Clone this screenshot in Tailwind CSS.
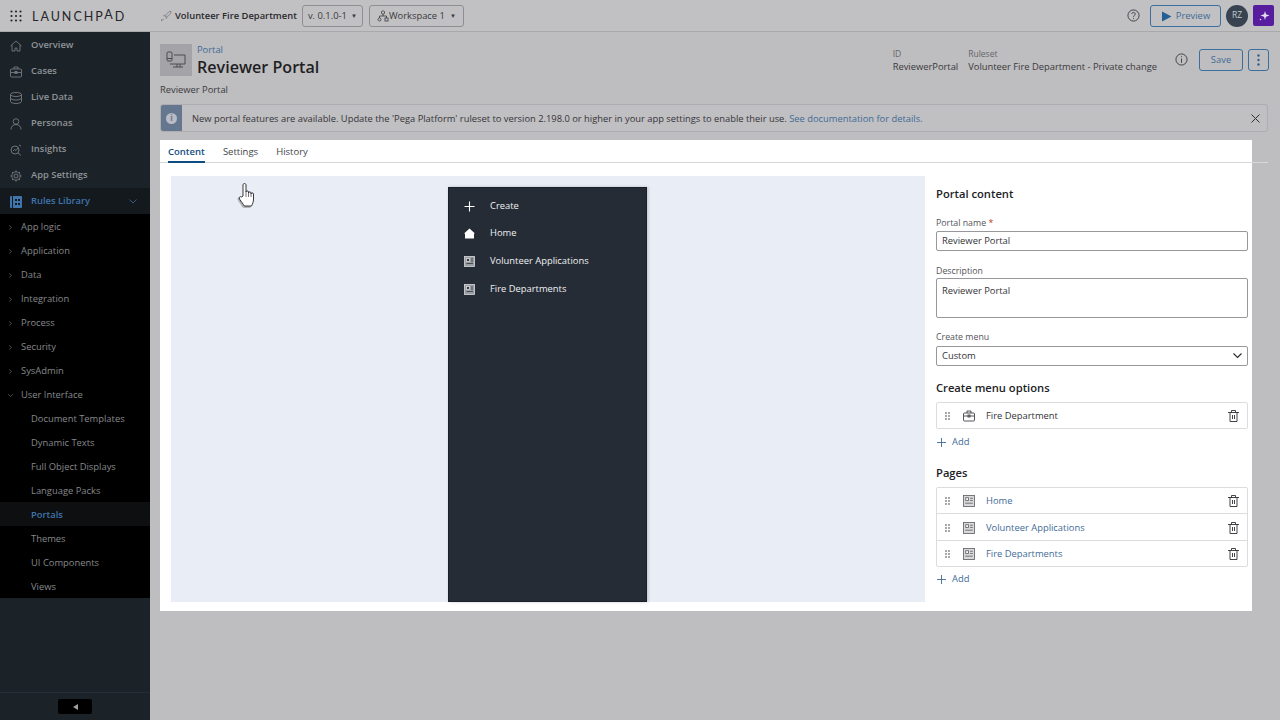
<!DOCTYPE html>
<html lang="en">
<head>
  <meta charset="UTF-8" />
  <meta name="viewport" content="width=device-width, initial-scale=1.0" />
  <title>Reviewer Portal</title>
  <script src="https://cdn.jsdelivr.net/npm/@tailwindcss/browser@4"></script>
</head>
<body class="bg-[#bebdbf] font-['Open_Sans',sans-serif] text-[#2b2b2e] overflow-hidden">
  <div class="relative w-[1280px] h-[720px] flex flex-col overflow-hidden">
    <!-- Top bar -->
    <header class="h-8 shrink-0 flex items-center bg-[#c1c0c2] border-b border-[#a9a8aa]">
      <div class="w-[160px] flex items-center pl-[10px] shrink-0">
        <svg class="w-3 h-3 mr-[10px]" viewBox="0 0 12 12" fill="#26262a"><circle cx="1.5" cy="1.5" r="1.1"/><circle cx="6" cy="1.5" r="1.1"/><circle cx="10.5" cy="1.5" r="1.1"/><circle cx="1.5" cy="6" r="1.1"/><circle cx="6" cy="6" r="1.1"/><circle cx="10.5" cy="6" r="1.1"/><circle cx="1.5" cy="10.5" r="1.1"/><circle cx="6" cy="10.5" r="1.1"/><circle cx="10.5" cy="10.5" r="1.1"/></svg>
        <span class="text-[12.5px] tracking-[0.16em] text-[#26262a] font-['Lato',sans-serif] leading-none pt-[3px]">LAUNCHP<span class="relative top-[-2px]">A</span>D</span>
      </div>
      <svg class="w-3 h-3 mr-[3px] shrink-0" viewBox="0 0 12 12" fill="none" stroke="#8a8a90" stroke-width="1"><path d="M1 11l3-2M5 7c1-3 3-5 6-6 0 3-2 5-5 6l-1 0zM3 6l2-1M6 9l1-2M2 9l-1 1"/></svg>
      <span class="text-[9.4px] font-semibold text-[#2a2a2e] mr-[5px] pt-[2px]">Volunteer Fire Department</span>
      <button class="h-[22px] w-[61px] rounded-[3px] border border-[#8f8e92] text-[9.4px] text-[#3a3a40] flex items-center justify-center gap-1 mr-[6px] pt-[1px]">v. 0.1.0-1 <span class="text-[6px]">▼</span></button>
      <button class="h-[22px] w-[95px] rounded-[3px] border border-[#8f8e92] text-[9.4px] text-[#3a3a40] flex items-center justify-center pt-[1px]">
        <svg class="w-3 h-3" viewBox="0 0 12 12" fill="none" stroke="#3a3a40" stroke-width="0.8"><rect x="4.5" y="1" width="3" height="3" rx="1"/><circle cx="2.5" cy="9.5" r="1.5"/><rect x="8" y="8" width="3" height="3"/><path d="M6 4v2M2.5 8V6h7v2"/></svg>
        Workspace 1 <span class="text-[6px] ml-[5px]">▼</span>
      </button>
      <div class="ml-auto flex items-center pr-[6px]">
        <svg class="w-[13px] h-[13px] mr-[10px]" viewBox="0 0 14 14" fill="none" stroke="#3a3a40" stroke-width="1"><circle cx="7" cy="7" r="6"/><path d="M5.2 5.4c0-2.3 3.700-2.300 3.700 0 0 1.500-1.900 1.500-1.900 3M7 9.600v1"/></svg>
        <button class="h-[22px] w-[71px] rounded-[3px] border border-[#3d6f9e] text-[9.4px] text-[#3f6c97] flex items-center justify-center gap-[4px] pt-[1px]">
          <svg class="w-[11px] h-[11px]" viewBox="0 0 11 11" fill="#255f95"><path d="M1 0.500l9.500 5-9.500 5z"/></svg>Preview
        </button>
        <div class="w-[22px] h-[22px] rounded-full bg-[#374350] text-[8.500px] text-[#c8c8cc] flex items-center justify-center ml-[5px]">RZ</div>
        <div class="w-[21px] h-[21px] rounded-[2px] bg-[#581d9e] flex items-center justify-center ml-[5px]">
          <svg class="w-3 h-3" viewBox="0 0 12 12" fill="#e6dcf2"><path d="M7 1l1 3.200L11.500 5.500 8 6.800 7 10 6 6.800 2.500 5.500 6 4.200z"/><circle cx="2.500" cy="9.500" r="0.800"/></svg>
        </div>
      </div>
    </header>

    <div class="flex flex-1 min-h-0">
      <!-- Sidebar -->
      <aside class="w-[150px] shrink-0 bg-[#1b2329] flex flex-col text-[9.4px] font-semibold text-[#8f9296]">
        <a class="h-[26px] flex items-center pl-[10px] gap-[9px] pt-[1px]"><svg class="w-[12px] h-[12px]" viewBox="0 0 12 12" fill="none" stroke="#777b80" stroke-width="0.9"><path d="M0.500 6L6 1l5.500 5M2 5v6h3V8h2v3h3V5"/></svg>Overview</a>
        <a class="h-[26px] flex items-center pl-[10px] gap-[9px] pt-[1px]"><svg class="w-[12px] h-[12px]" viewBox="0 0 12 12" fill="none" stroke="#777b80" stroke-width="0.9"><rect x="0.500" y="3" width="11" height="8" rx="1"/><path d="M4 3V1h4v2M0.500 6.500h11"/><rect x="5" y="5.500" width="2" height="2"/></svg>Cases</a>
        <a class="h-[26px] flex items-center pl-[10px] gap-[9px] pt-[1px]"><svg class="w-[12px] h-[12px]" viewBox="0 0 12 12" fill="none" stroke="#777b80" stroke-width="0.9"><ellipse cx="6" cy="2.500" rx="5.500" ry="2"/><path d="M0.500 2.500v7c0 1.100 2.500 2 5.500 2s5.500-.9 5.500-2v-7M0.500 6c0 1.100 2.500 2 5.500 2s5.500-.9 5.500-2"/></svg>Live Data</a>
        <a class="h-[26px] flex items-center pl-[10px] gap-[9px] pt-[1px]"><svg class="w-[12px] h-[12px]" viewBox="0 0 12 12" fill="none" stroke="#777b80" stroke-width="0.9"><circle cx="6" cy="3.500" r="2.800"/><path d="M1 11.500c0-3 2-5 5-5s5 2 5 5"/></svg>Personas</a>
        <a class="h-[26px] flex items-center pl-[10px] gap-[9px] pt-[1px]"><svg class="w-[12px] h-[12px]" viewBox="0 0 12 12" fill="none" stroke="#777b80" stroke-width="0.9"><circle cx="5" cy="6" r="4"/><path d="M8 9l3 2.500M3 7l1.500-1.500 1.500 1 2-2.500M9 1l2 1"/></svg>Insights</a>
        <a class="h-[26px] flex items-center pl-[10px] gap-[9px] pt-[1px]"><svg class="w-[12px] h-[12px]" viewBox="0 0 12 12" fill="none" stroke="#777b80" stroke-width="0.9"><circle cx="6" cy="6" r="2"/><circle cx="6" cy="6" r="4.200"/><path d="M6 .5v1.300M6 10.200v1.300M.5 6h1.300M10.200 6h1.300M2 2l1 1M9 9l1 1M10 2L9 3M3 9l-1 1"/></svg>App Settings</a>
        <a class="h-[26px] flex items-center pl-[10px] gap-[9px] pt-[1px] bg-[#14191e] text-[#3f74ad]">
          <svg class="w-[12px] h-[12px]" viewBox="0 0 12 12"><rect width="12" height="12" rx="1" fill="#3f74ad"/><rect x="2" y="0" width="1" height="12" fill="#14191e"/><rect x="5" y="3" width="2" height="2" fill="#14191e"/><rect x="8" y="3" width="2" height="2" fill="#14191e"/><rect x="5" y="7" width="2" height="2" fill="#14191e"/><rect x="8" y="7" width="2" height="2" fill="#14191e"/></svg>
          Rules Library
          <svg class="ml-auto mr-[13px] w-[8px] h-[5px]" viewBox="0 0 8 5" fill="none" stroke="#3f6d9f" stroke-width="0.8"><path d="M0.500 0.500L4 4l3.500-3.500"/></svg>
        </a>
        <div class="bg-black font-normal text-[9.4px] text-[#86888b]">
          <a class="h-6 flex items-center pl-[9px] pt-[2px]"><svg class="w-[3px] h-[5px] mr-[9px]" viewBox="0 0 3 5" fill="none" stroke="#66686b" stroke-width=".7"><path d="M.3.300L2.500 2.500.3 4.700"/></svg>App logic</a>
          <a class="h-6 flex items-center pl-[9px] pt-[2px]"><svg class="w-[3px] h-[5px] mr-[9px]" viewBox="0 0 3 5" fill="none" stroke="#66686b" stroke-width=".7"><path d="M.3.300L2.500 2.500.3 4.700"/></svg>Application</a>
          <a class="h-6 flex items-center pl-[9px] pt-[2px]"><svg class="w-[3px] h-[5px] mr-[9px]" viewBox="0 0 3 5" fill="none" stroke="#66686b" stroke-width=".7"><path d="M.3.300L2.500 2.500.3 4.700"/></svg>Data</a>
          <a class="h-6 flex items-center pl-[9px] pt-[2px]"><svg class="w-[3px] h-[5px] mr-[9px]" viewBox="0 0 3 5" fill="none" stroke="#66686b" stroke-width=".7"><path d="M.3.300L2.500 2.500.3 4.700"/></svg>Integration</a>
          <a class="h-6 flex items-center pl-[9px] pt-[2px]"><svg class="w-[3px] h-[5px] mr-[9px]" viewBox="0 0 3 5" fill="none" stroke="#66686b" stroke-width=".7"><path d="M.3.300L2.500 2.500.3 4.700"/></svg>Process</a>
          <a class="h-6 flex items-center pl-[9px] pt-[2px]"><svg class="w-[3px] h-[5px] mr-[9px]" viewBox="0 0 3 5" fill="none" stroke="#66686b" stroke-width=".7"><path d="M.3.300L2.500 2.500.3 4.700"/></svg>Security</a>
          <a class="h-6 flex items-center pl-[9px] pt-[2px]"><svg class="w-[3px] h-[5px] mr-[9px]" viewBox="0 0 3 5" fill="none" stroke="#66686b" stroke-width=".7"><path d="M.3.300L2.500 2.500.3 4.700"/></svg>SysAdmin</a>
          <a class="h-6 flex items-center pl-[8px] pt-[2px]"><svg class="w-[5px] h-[3px] mr-[8px]" viewBox="0 0 5 3" fill="none" stroke="#66686b" stroke-width=".7"><path d="M.3.300L2.500 2.500 4.700.300"/></svg>User Interface</a>
          <a class="h-6 flex items-center pl-[31px] pt-[2px]">Document Templates</a>
          <a class="h-6 flex items-center pl-[31px] pt-[2px]">Dynamic Texts</a>
          <a class="h-6 flex items-center pl-[31px] pt-[2px]">Full Object Displays</a>
          <a class="h-6 flex items-center pl-[31px] pt-[2px]">Language Packs</a>
          <a class="h-6 flex items-center pl-[31px] pt-[2px] bg-[#0d0f11] font-semibold text-[#3f74ad]">Portals</a>
          <a class="h-6 flex items-center pl-[31px] pt-[2px]">Themes</a>
          <a class="h-6 flex items-center pl-[31px] pt-[2px]">UI Components</a>
          <a class="h-6 flex items-center pl-[31px] pt-[2px]">Views</a>
        </div>
        <div class="mt-auto h-[28px] border-t border-[#262e35] flex items-center justify-center">
          <div class="w-[34px] h-[15px] rounded-[2px] bg-black flex items-center justify-center">
            <svg class="w-[5px] h-[6px]" viewBox="0 0 5 6" fill="#a0a0a0"><path d="M5 0v6L0 3z"/></svg>
          </div>
        </div>
      </aside>

      <!-- Main -->
      <main class="flex-1 min-w-0 pl-[10px] pr-[12px] pt-3">
        <!-- Rule header -->
        <div class="flex items-start h-8">
          <div class="w-8 h-8 bg-[#a4a4a8] flex items-center justify-center shrink-0">
            <svg class="w-5 h-5" viewBox="0 0 20 20" fill="none" stroke="#4b4b50" stroke-width="1"><rect x="1" y="2" width="5" height="9" rx="1"/><path d="M1 8.500h5M8 5h11v9H4M11 14v3M14 14v3M7 17h10"/></svg>
          </div>
          <div class="ml-[5px] leading-none">
            <div class="text-[9.35px] text-[#3f6c97] h-[10px] mt-[1px] leading-[10px]">Portal</div>
            <h1 class="text-[16.1px] font-semibold text-[#1f1f23] mt-[2px] leading-[20px]">Reviewer Portal</h1>
          </div>
          <div class="ml-auto flex items-start pt-[4px] mr-[-1px]">
            <div class="leading-[12px] mr-[10px]"><div class="text-[#66666a] text-[8.500px]">ID</div><div class="text-[#3a3a3e] text-[9.35px] mt-[1px]">ReviewerPortal</div></div>
            <div class="leading-[12px]"><div class="text-[#66666a] text-[8.500px]">Ruleset</div><div class="text-[#3a3a3e] text-[9.35px] mt-[1px]">Volunteer Fire Department - Private change</div></div>
            <svg class="w-[13px] h-[13px] ml-[18px] mt-[5px]" viewBox="0 0 14 14" fill="none" stroke="#3a3a40" stroke-width="1"><circle cx="7" cy="7" r="6"/><path d="M7 6v4.500M7 3.500v1"/></svg>
            <button class="ml-[11px] w-[44px] h-[22px] mt-[1px] rounded-[3px] border border-[#3d6f9e] text-[9.4px] text-[#3f6c97]">Save</button>
            <button class="ml-[5px] w-[21px] h-[22px] mt-[1px] rounded-[3px] border border-[#3d6f9e] flex items-center justify-center">
              <svg class="w-[3px] h-[12px]" viewBox="0 0 3 12" fill="#33608c"><circle cx="1.500" cy="1.500" r="1.200"/><circle cx="1.500" cy="6" r="1.200"/><circle cx="1.500" cy="10.500" r="1.200"/></svg>
            </button>
          </div>
        </div>
        <p class="text-[9.35px] text-[#3a3a3e] mt-[7px] leading-[14px]">Reviewer Portal</p>

        <!-- Notice -->
        <div class="mt-[7px] h-[28px] rounded-[3px] border border-[#adacb0] bg-[#c0bfc2] flex items-center overflow-hidden">
          <div class="w-[21px] h-full bg-[#65778f] flex items-center justify-center shrink-0">
            <div class="w-[11px] h-[11px] rounded-full bg-[#b8bcc4] text-[8px] font-bold text-[#65778f] flex items-center justify-center leading-none">i</div>
          </div>
          <span class="ml-[10px] text-[9.35px] text-[#36363a] pt-[2px]">New portal features are available. Update the 'Pega Platform' ruleset to version 2.198.0 or higher in your app settings to enable their use. <span class="text-[#3f6c97]">See documentation for details.</span></span>
          <svg class="ml-auto mr-[7px] w-[9px] h-[9px]" viewBox="0 0 9 9" fill="none" stroke="#2f2f33" stroke-width="1"><path d="M0.500 0.500l8 8M8.500 0.500l-8 8"/></svg>
        </div>

        <!-- Tabbed panel -->
        <div class="mt-[8px] w-[1092px] h-[471px] bg-white flex flex-col">
          <div class="h-[23px] shrink-0 border-b border-[#d8d8dc] flex items-stretch pl-2 gap-[18px] text-[9.5px] w-[1108px]">
            <span class="h-[23px] border-b-2 border-[#0f4c81] font-semibold text-[#154d80] flex items-center pt-[3px]">Content</span>
            <span class="flex items-center text-[#444448] pt-[2px]">Settings</span>
            <span class="flex items-center text-[#444448] pt-[2px]">History</span>
          </div>
          <div class="flex flex-1 min-h-0 pl-[11px] pt-[13px] pb-[9px]">
            <!-- Preview canvas -->
            <div class="w-[754px] bg-[#e9edf6] pt-[11px] pl-[277px]">
              <div class="w-[199px] h-[415px] bg-[#252c35] border border-[#1a2029] shadow-[1px_0_3px_rgba(0,0,0,0.2)] pt-[5px] text-[9.4px] text-[#eef0f3]">
                <div class="h-[27px] flex items-center pl-[15px] gap-[15px]"><svg class="w-[11px] h-[11px]" viewBox="0 0 11 11" stroke="#fff" stroke-width="1.100"><path d="M5.500 0.500v10M0.500 5.500h10"/></svg>Create</div>
                <div class="h-[27px] flex items-center pl-[15px] gap-[15px]"><svg class="w-[11px] h-[11px]" viewBox="0 0 11 11" fill="#fff"><path d="M5.500 0.500L11 5.500H10V10.500H1V5.500H0z"/></svg>Home</div>
                <div class="h-[28px] flex items-center pl-[15px] gap-[15px]"><svg class="w-[11px] h-[11px]" viewBox="0 0 11 11" fill="#9a9da1" stroke="#d8d9dc" stroke-width="0.800"><rect x="0.500" y="0.500" width="10" height="10"/><rect x="2.500" y="2.500" width="3" height="3" fill="#33393f"/><path d="M7 3h2M7 5h2M2.500 7.500h6.500" stroke="#33393f"/></svg>Volunteer Applications</div>
                <div class="h-[28px] flex items-center pl-[15px] gap-[15px]"><svg class="w-[11px] h-[11px]" viewBox="0 0 11 11" fill="#9a9da1" stroke="#d8d9dc" stroke-width="0.800"><rect x="0.500" y="0.500" width="10" height="10"/><rect x="2.500" y="2.500" width="3" height="3" fill="#33393f"/><path d="M7 3h2M7 5h2M2.500 7.500h6.500" stroke="#33393f"/></svg>Fire Departments</div>
              </div>
            </div>

            <!-- Properties -->
            <div class="w-[312px] ml-[11px] text-[9.4px] text-[#333337]">
              <h2 class="text-[11.2px] font-semibold text-[#222226] mt-[10px] leading-[16px]">Portal content</h2>
              <label class="block mt-[15px] text-[8.800px] text-[#55555a] leading-[12px]">Portal name <span class="text-[#c0392b]">*</span></label>
              <div class="mt-[2px] h-5 border border-[#97979c] rounded-[2px] px-[5px] pt-[1px] flex items-center">Reviewer Portal</div>
              <label class="block mt-[14px] text-[8.800px] text-[#55555a] leading-[12px]">Description</label>
              <div class="mt-[1px] h-10 border border-[#97979c] rounded-[2px] px-[5px] pt-[5px] leading-[14px]">Reviewer Portal</div>
              <label class="block mt-[13px] text-[8.800px] text-[#55555a] leading-[12px]">Create menu</label>
              <div class="mt-[3px] h-5 border border-[#97979c] rounded-[2px] px-[5px] flex items-center justify-between">Custom
                <svg class="w-[9px] h-[6px]" viewBox="0 0 9 6" fill="none" stroke="#2a2a2e" stroke-width="1.100"><path d="M0.500 0.500L4.500 4.500 8.500 0.500"/></svg>
              </div>
              <h3 class="text-[11.2px] font-semibold text-[#222226] mt-[14px] leading-[16px]">Create menu options</h3>
              <div class="mt-[6px] border border-[#dcdce0] rounded-[2px] h-[27px] flex items-center">
                <svg class="ml-[8px] w-[5px] h-[8px] shrink-0" viewBox="0 0 5 8" fill="#3b3b40"><circle cx="1" cy="1" r=".8"/><circle cx="4" cy="1" r=".8"/><circle cx="1" cy="4" r=".8"/><circle cx="4" cy="4" r=".8"/><circle cx="1" cy="7" r=".8"/><circle cx="4" cy="7" r=".8"/></svg>
                <svg class="ml-[13px] w-3 h-3 shrink-0" viewBox="0 0 12 12" fill="none" stroke="#444449" stroke-width=".9"><rect x=".5" y="3" width="11" height="8" rx="1"/><path d="M4 3V1h4v2M.5 6h11"/><rect x="5" y="5" width="2" height="2"/></svg>
                <span class="ml-[11px] pt-[2px]">Fire Department</span>
                <svg class="ml-auto mr-2 w-[11px] h-[12px]" viewBox="0 0 11 12" fill="none" stroke="#2f2f33" stroke-width=".9"><path d="M0 2.500h11M2 2.500V11.500h7V2.500M3.500 2.500V.5h4v2M4.500 5v4M6.500 5v4"/></svg>
              </div>
              <div class="mt-[6px] h-[14px] flex items-center text-[#3f6c97]"><svg class="ml-[1px] w-[9px] h-[9px] mr-[6px]" viewBox="0 0 9 9" stroke="#3f6c97" stroke-width=".9"><path d="M4.500 0v9M0 4.500h9"/></svg>Add</div>
              <h3 class="text-[11.2px] font-semibold text-[#222226] mt-[16px] leading-[16px]">Pages</h3>
              <div class="mt-[6px] border border-[#dcdce0] rounded-[2px] divide-y divide-[#dcdce0] text-[#3f6c97]">
                <div class="h-[26px] flex items-center pt-[1px]">
                  <svg class="ml-[8px] w-[5px] h-[8px] shrink-0" viewBox="0 0 5 8" fill="#3b3b40"><circle cx="1" cy="1" r=".8"/><circle cx="4" cy="1" r=".8"/><circle cx="1" cy="4" r=".8"/><circle cx="4" cy="4" r=".8"/><circle cx="1" cy="7" r=".8"/><circle cx="4" cy="7" r=".8"/></svg>
                  <svg class="ml-[13px] w-3 h-3 shrink-0" viewBox="0 0 11 11" fill="#d9d9dc" stroke="#66666b" stroke-width=".8"><rect x=".5" y=".5" width="10" height="10"/><rect x="2.500" y="2.500" width="2.500" height="2.500" fill="#fff"/><path d="M6.500 3h2.500M6.500 5h2.500M2 7.500h7"/></svg>
                  <span class="ml-[11px] pt-[1px]">Home</span>
                  <svg class="ml-auto mr-2 w-[11px] h-[12px]" viewBox="0 0 11 12" fill="none" stroke="#2f2f33" stroke-width=".9"><path d="M0 2.500h11M2 2.500V11.500h7V2.500M3.500 2.500V.5h4v2M4.500 5v4M6.500 5v4"/></svg>
                </div>
                <div class="h-[27px] flex items-center pt-[1px]">
                  <svg class="ml-[8px] w-[5px] h-[8px] shrink-0" viewBox="0 0 5 8" fill="#3b3b40"><circle cx="1" cy="1" r=".8"/><circle cx="4" cy="1" r=".8"/><circle cx="1" cy="4" r=".8"/><circle cx="4" cy="4" r=".8"/><circle cx="1" cy="7" r=".8"/><circle cx="4" cy="7" r=".8"/></svg>
                  <svg class="ml-[13px] w-3 h-3 shrink-0" viewBox="0 0 11 11" fill="#d9d9dc" stroke="#66666b" stroke-width=".8"><rect x=".5" y=".5" width="10" height="10"/><rect x="2.500" y="2.500" width="2.500" height="2.500" fill="#fff"/><path d="M6.500 3h2.500M6.500 5h2.500M2 7.500h7"/></svg>
                  <span class="ml-[11px] pt-[1px]">Volunteer Applications</span>
                  <svg class="ml-auto mr-2 w-[11px] h-[12px]" viewBox="0 0 11 12" fill="none" stroke="#2f2f33" stroke-width=".9"><path d="M0 2.500h11M2 2.500V11.500h7V2.500M3.500 2.500V.5h4v2M4.500 5v4M6.500 5v4"/></svg>
                </div>
                <div class="h-[25px] flex items-center pt-[1px]">
                  <svg class="ml-[8px] w-[5px] h-[8px] shrink-0" viewBox="0 0 5 8" fill="#3b3b40"><circle cx="1" cy="1" r=".8"/><circle cx="4" cy="1" r=".8"/><circle cx="1" cy="4" r=".8"/><circle cx="4" cy="4" r=".8"/><circle cx="1" cy="7" r=".8"/><circle cx="4" cy="7" r=".8"/></svg>
                  <svg class="ml-[13px] w-3 h-3 shrink-0" viewBox="0 0 11 11" fill="#d9d9dc" stroke="#66666b" stroke-width=".8"><rect x=".5" y=".5" width="10" height="10"/><rect x="2.500" y="2.500" width="2.500" height="2.500" fill="#fff"/><path d="M6.500 3h2.500M6.500 5h2.500M2 7.500h7"/></svg>
                  <span class="ml-[11px] pt-[1px]">Fire Departments</span>
                  <svg class="ml-auto mr-2 w-[11px] h-[12px]" viewBox="0 0 11 12" fill="none" stroke="#2f2f33" stroke-width=".9"><path d="M0 2.500h11M2 2.500V11.500h7V2.500M3.500 2.500V.5h4v2M4.500 5v4M6.500 5v4"/></svg>
                </div>
              </div>
              <div class="mt-[5px] h-[14px] flex items-center text-[#3f6c97]"><svg class="ml-[1px] w-[9px] h-[9px] mr-[6px]" viewBox="0 0 9 9" stroke="#3f6c97" stroke-width=".9"><path d="M4.500 0v9M0 4.500h9"/></svg>Add</div>
            </div>
          </div>
        </div>
      </main>
    </div>

    <!-- Mouse pointer -->
    <svg class="absolute left-[235px] top-[181px] w-[22px] h-[28px]" viewBox="0 0 22 28">
      <path d="M6 18c-1-1.500-3.500-2-3.500 0 0 1 1 2.500 2.500 4.500S7 27 9 27h6c1 0 1-4 0-8l-6-5z" fill="#777" opacity=".5"/>
      <path d="M8 15V4c0-2 3-2 3 0v7c0-1.500 2.500-1.500 2.500 0v1c0-1.500 2.500-1.500 2.500 0v1c0-1.500 2.500-1.500 2.500 0v5c0 3-1 5-2 7h-7c-1.500-2-3-4-5-7-1-1.500.5-3 2-2z" fill="#fff" stroke="#222" stroke-width=".9"/>
      <path d="M11 11v5M13.500 12v4M16 13v3" stroke="#333" stroke-width=".7" fill="none"/>
    </svg>
  </div>
</body>
</html>
